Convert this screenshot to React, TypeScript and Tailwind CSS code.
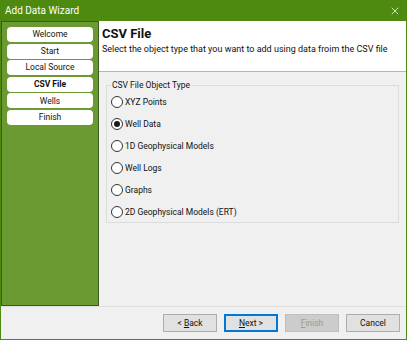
import { X } from "lucide-react";

const steps = ["Welcome", "Start", "Local Source", "CSV File", "Wells", "Finish"];
const current = "CSV File";

const objectTypes = [
  "XYZ Points",
  "Well Data",
  "1D Geophysical Models",
  "Well Logs",
  "Graphs",
  "2D Geophysical Models (ERT)",
];
const selected = "Well Data";

function Radio({ label, checked }: { label: string; checked: boolean }) {
  return (
    <label className="flex h-[22px] items-center gap-[2px]">
      <span className="flex h-[12px] w-[12px] items-center justify-center rounded-full border border-[#333] bg-white">
        {checked && <span className="h-[6px] w-[6px] rounded-full bg-[#1a1a1a]" />}
      </span>
      <span>{label}</span>
    </label>
  );
}

function WizardButton({
  children,
  primary,
  disabled,
}: {
  children: React.ReactNode;
  primary?: boolean;
  disabled?: boolean;
}) {
  return (
    <button
      disabled={disabled}
      className={
        "h-[18px] w-[54px] text-[8.5px] leading-none " +
        (disabled
          ? "border border-[#bfbfbf] bg-[#cccccc] text-[#9a9a9a]"
          : primary
            ? "border-2 border-[#0078d7] bg-[#e1e1e1] text-[#111]"
            : "border border-[#adadad] bg-[#e1e1e1] text-[#111]")
      }
    >
      {children}
    </button>
  );
}

export default function App() {
  return (
    <div
      className="flex h-[340px] w-[407px] flex-col bg-[#4f8a10] text-[8.5px] text-[#111]"
      style={{ fontFamily: '"Segoe UI", Roboto, "Liberation Sans", sans-serif' }}
    >
      {/* title bar */}
      <div className="flex h-[21px] shrink-0 items-center justify-between pl-[5px] pr-[6px] text-white">
        <span className="text-[10px]">Add Data Wizard</span>
        <X className="h-[12px] w-[12px]" strokeWidth={1.5} />
      </div>

      <div className="mx-[1px] mb-[1px] flex flex-1 flex-col bg-[#f0f0f0]">
        <div className="flex h-[285px]">
          {/* step list */}
          <div className="flex w-[98px] flex-col gap-[1.6px] border border-[#3d5a22] bg-[#6b9a32] px-[5px] pt-[5px]">
            {steps.map((s) => (
              <div
                key={s}
                className={
                  "flex h-[15px] items-center justify-center rounded-[4px] bg-white text-[8.5px] " +
                  (s === current ? "font-bold" : "")
                }
              >
                {s}
              </div>
            ))}
          </div>

          {/* page */}
          <div className="flex flex-1 flex-col">
            <div className="h-[51px] border-b border-[#b4b4b4] bg-white px-[3px] pt-[4px]">
              <div className="text-[13px] font-bold leading-[18px]">CSV File</div>
              <div className="whitespace-nowrap text-[9px] leading-[12px]">
                Select the object type that you want to add using data froim the CSV file
              </div>
            </div>

            <div className="px-[7px] pt-[7px]">
              <fieldset className="h-[144px] border border-[#dcdcdc] px-[4px] pb-0">
                <legend className="px-[1px] text-[8.5px] leading-[13px]">CSV File Object Type</legend>
                <div className="-mt-[1px] flex flex-col text-[8.5px]">
                  {objectTypes.map((t) => (
                    <Radio key={t} label={t} checked={t === selected} />
                  ))}
                </div>
              </fieldset>
            </div>
          </div>
        </div>

        {/* buttons */}
        <div className="flex flex-1 items-center justify-end gap-[7px] border-t border-[#dfdfdf] pr-[6px]">
          <WizardButton>
            &lt; <u>B</u>ack
          </WizardButton>
          <WizardButton primary>
            <u>N</u>ext &gt;
          </WizardButton>
          <WizardButton disabled>
            <u>F</u>inish
          </WizardButton>
          <WizardButton>Cancel</WizardButton>
        </div>
      </div>
    </div>
  );
}
